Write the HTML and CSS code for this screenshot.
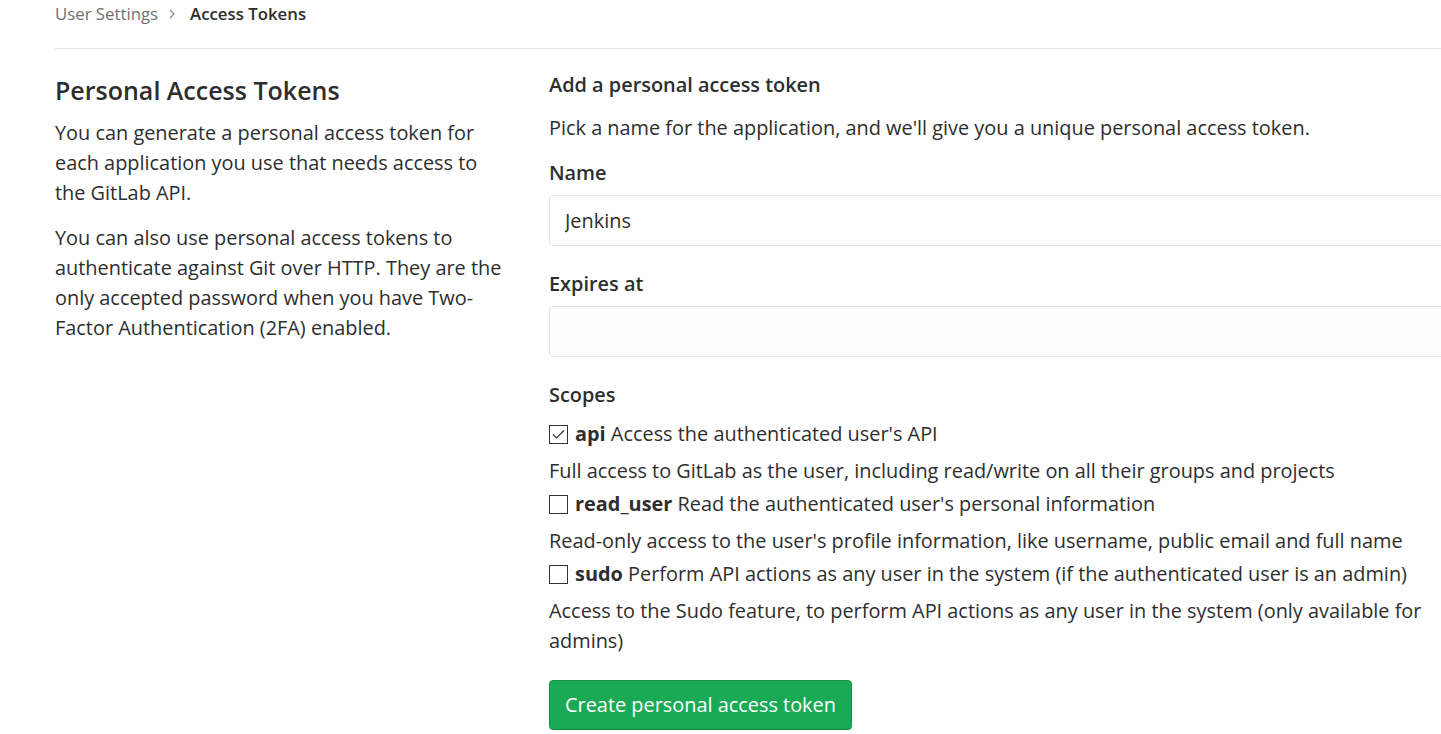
FILE: index.html
```html
<!DOCTYPE html>
<html lang="en">
<head>
<meta charset="utf-8">
<title>Access Tokens · User Settings</title>
<link rel="stylesheet" href="styles.css">
</head>
<body>
<div class="page">
  <nav class="breadcrumbs">
    <a class="crumb" href="#">User Settings</a>
    <svg class="chev" width="8" height="12" viewBox="0 0 8 12"><path d="M2 2l4 4-4 4" fill="none" stroke="#8c8c8c" stroke-width="1.3"/></svg>
    <span class="crumb current">Access Tokens</span>
  </nav>
  <div class="row">
    <aside class="side">
      <h4 class="side-title">Personal Access Tokens</h4>
      <p>You can generate a personal access token for each application you use that needs access to the GitLab API.</p>
      <p>You can also use personal access tokens to authenticate against Git over HTTP. They are the only accepted password when you have Two-Factor Authentication (2FA) enabled.</p>
    </aside>
    <section class="main">
      <h5 class="form-title">Add a personal access token</h5>
      <p class="intro">Pick a name for the application, and we'll give you a unique personal access token.</p>
      <label class="field-label" for="name">Name</label>
      <input class="field" id="name" type="text" value="Jenkins">
      <label class="field-label gap" for="exp">Expires at</label>
      <input class="field alt" id="exp" type="text" value="">
      <div class="field-label gap">Scopes</div>
      <div class="scopes">
        <div class="scope">
          <span class="cb"><svg width="19" height="19" viewBox="0 0 19 19"><rect x="0.5" y="0.5" width="18" height="18" fill="#fff" stroke="#333"/><path d="M4 9.5l3.5 3.5 7.5-7.5" fill="none" stroke="#333" stroke-width="1.2"/></svg></span>
          <span><b>api</b> Access the authenticated user's API</span>
        </div>
        <p class="help">Full access to GitLab as the user, including read/write on all their groups and projects</p>
        <div class="scope">
          <span class="cb"><svg width="19" height="19" viewBox="0 0 19 19"><rect x="0.5" y="0.5" width="18" height="18" fill="#fff" stroke="#333"/></svg></span>
          <span><b>read_user</b> Read the authenticated user's personal information</span>
        </div>
        <p class="help">Read-only access to the user's profile information, like username, public email and full name</p>
        <div class="scope">
          <span class="cb"><svg width="19" height="19" viewBox="0 0 19 19"><rect x="0.5" y="0.5" width="18" height="18" fill="#fff" stroke="#333"/></svg></span>
          <span><b>sudo</b> Perform API actions as any user in the system (if the authenticated user is an admin)</span>
        </div>
        <p class="help">Access to the Sudo feature, to perform API actions as any user in the system (only available for admins)</p>
      </div>
      <button class="btn-create" type="button">Create personal access token</button>
    </section>
  </div>
</div>
</body>
</html>
```
FILE: styles.css
```css
html, body {
  margin: 0;
  padding: 0;
  overflow: hidden;
  background: #fff;
}
body {
  font-family: "Open Sans", "Noto Sans", sans-serif;
  font-size: 19.9px;
  line-height: 30px;
  color: #2e2e2e;
}
.page {
  padding-left: 55px;
  width: 1437px;
}
.breadcrumbs {
  display: flex;
  align-items: center;
  height: 28px;
  padding-bottom: 20px;
  border-bottom: 1px solid #e5e5e5;
  font-size: 16.8px;
  width: 1400px;
}
.crumb {
  color: #707070;
  text-decoration: none;
}
.chev {
  margin: 0 14px 0 10px;
}
.crumb.current {
  color: #2e2e2e;
  font-weight: 600;
}
.row {
  display: flex;
  gap: 42px;
  padding-top: 21px;
}
.side {
  width: 452px;
  flex: none;
  padding-top: 5px;
}
.side-title {
  margin: 0 0 13px;
  font-size: 25px;
  line-height: 30px;
  font-weight: 600;
}
.side p {
  margin: 0 0 15px;
}
.main {
  width: 943px;
  flex: none;
}
.form-title {
  margin: 0 0 13px;
  font-size: 19.9px;
  line-height: 30px;
  font-weight: 600;
}
.intro {
  margin: 0 0 15px;
}
.field-label {
  display: block;
  font-weight: 600;
  margin-bottom: 7px;
}
.field-label.gap {
  margin-top: 23px;
}
.field {
  display: block;
  box-sizing: border-box;
  width: 100%;
  height: 51px;
  border: 1px solid #e5e5e5;
  border-radius: 4px;
  padding: 0 15px;
  font: inherit;
  color: #2e2e2e;
  background: #fff;
  outline: none;
}
.field.alt {
  background: #fefefe;
}
.scopes {
  margin-top: 9px;
}
.scope {
  display: flex;
  align-items: center;
  gap: 7px;
}
.scope b {
  font-weight: 700;
}
.cb {
  display: flex;
  width: 19px;
  height: 19px;
  flex: none;
}
.help {
  margin: 7px 0 3px;
}
.help:last-child {
  margin-bottom: 0;
}
.btn-create {
  margin-top: 24px;
  height: 50px;
  padding: 0 15px;
  background: #1aaa55;
  border: 1px solid #168f48;
  border-radius: 4px;
  color: #fff;
  font: inherit;
  cursor: pointer;
}
```
